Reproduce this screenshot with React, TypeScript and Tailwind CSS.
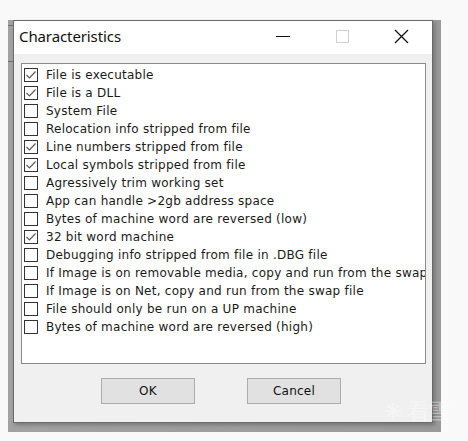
import React from "react";

const items: [string, boolean][] = [
  ["File is executable", true],
  ["File is a DLL", true],
  ["System File", false],
  ["Relocation info stripped from file", false],
  ["Line numbers stripped from file", true],
  ["Local symbols stripped from file", true],
  ["Agressively trim working set", false],
  ["App can handle >2gb address space", false],
  ["Bytes of machine word are reversed (low)", false],
  ["32 bit word machine", true],
  ["Debugging info stripped from file in .DBG file", false],
  ["If Image is on removable media, copy and run from the swap file", false],
  ["If Image is on Net, copy and run from the swap file", false],
  ["File should only be run on a UP machine", false],
  ["Bytes of machine word are reversed (high)", false],
];

function Box({ checked }: { checked: boolean }) {
  return (
    <div className="w-[14px] h-[14px] border border-[#333333] bg-white shrink-0 flex items-center justify-center">
      {checked && (
        <svg width="12" height="12" viewBox="0 0 12 12">
          <path d="M1.5 6 L4.5 9 L10.5 2.5" fill="none" stroke="#5a5a5a" strokeWidth="1.2" />
        </svg>
      )}
    </div>
  );
}

export default function App() {
  return (
    <div className="w-[468px] h-[441px] bg-[#f9f9f9] pt-[20px] pl-[8px] overflow-hidden">
      <div className="relative w-[433px] h-[412px] bg-gradient-to-r from-[#a2a2a2] to-[#9a9a9a] pl-[5px]">
        <div className="absolute left-0 top-[5px] w-[5px] h-px bg-[#6e6e6e]" />
        <div className="absolute left-0 top-[41px] w-[5px] h-px bg-[#6e6e6e]" />
        <div className="w-[420px] h-[403px] border border-[#6b6b6b] bg-[#f0f0f0] flex flex-col shadow-[2px_2px_4px_rgba(0,0,0,0.25)]">
          <div className="h-[33px] bg-white flex items-center shrink-0" style={{ fontFamily: '"Noto Sans", "Open Sans", sans-serif' }}>
            <span className="ml-[5px] text-[15px] text-[#111] -mt-[3px] tracking-[-0.1px]">Characteristics</span>
            <div className="ml-auto flex items-center h-full -mt-[2px]">
              <div className="w-[14px] h-px bg-[#111] mr-[46px]" />
              <div className="w-[13px] h-[13px] border border-[#cfcfcf] mr-[45px]" />
              <svg width="15" height="15" viewBox="0 0 15 15" className="mr-[23px]">
                <path d="M1 1 L14 14 M14 1 L1 14" stroke="#111" strokeWidth="1.3" fill="none" />
              </svg>
            </div>
          </div>
          <div className="flex-1 flex flex-col px-[7px] pr-[6px] pt-[9px]">
            <div className="h-[301px] border border-[#8a8a8a] bg-white pt-[2px] pl-[2px] overflow-hidden" style={{ fontFamily: '"DejaVu Sans", Verdana, sans-serif' }}>
              {items.map(([label, checked]) => (
                <div key={label} className="h-[18px] flex items-center gap-[8px] whitespace-nowrap">
                  <Box checked={checked} />
                  <span className="text-[12px] text-[#1a1a1a] tracking-[0.25px]">{label}</span>
                </div>
              ))}
            </div>
            <div className="flex pl-[80px] gap-[52px] mt-[14px]" style={{ fontFamily: '"DejaVu Sans", Verdana, sans-serif' }}>
              <button className="w-[94px] h-[26px] bg-[#e1e1e1] border border-[#adadad] text-[12px] text-[#111] tracking-[0.25px]">OK</button>
              <button className="w-[94px] h-[26px] bg-[#e1e1e1] border border-[#adadad] text-[12px] text-[#111] tracking-[0.25px]">Cancel</button>
            </div>
          </div>
        </div>
        <div className="absolute left-[376px] top-[374px] text-[22px] leading-[30px] text-white/40 pointer-events-none whitespace-nowrap" style={{ fontFamily: '"Noto Sans CJK SC", sans-serif' }}>
          ❋ 看雪
        </div>
      </div>
    </div>
  );
}
